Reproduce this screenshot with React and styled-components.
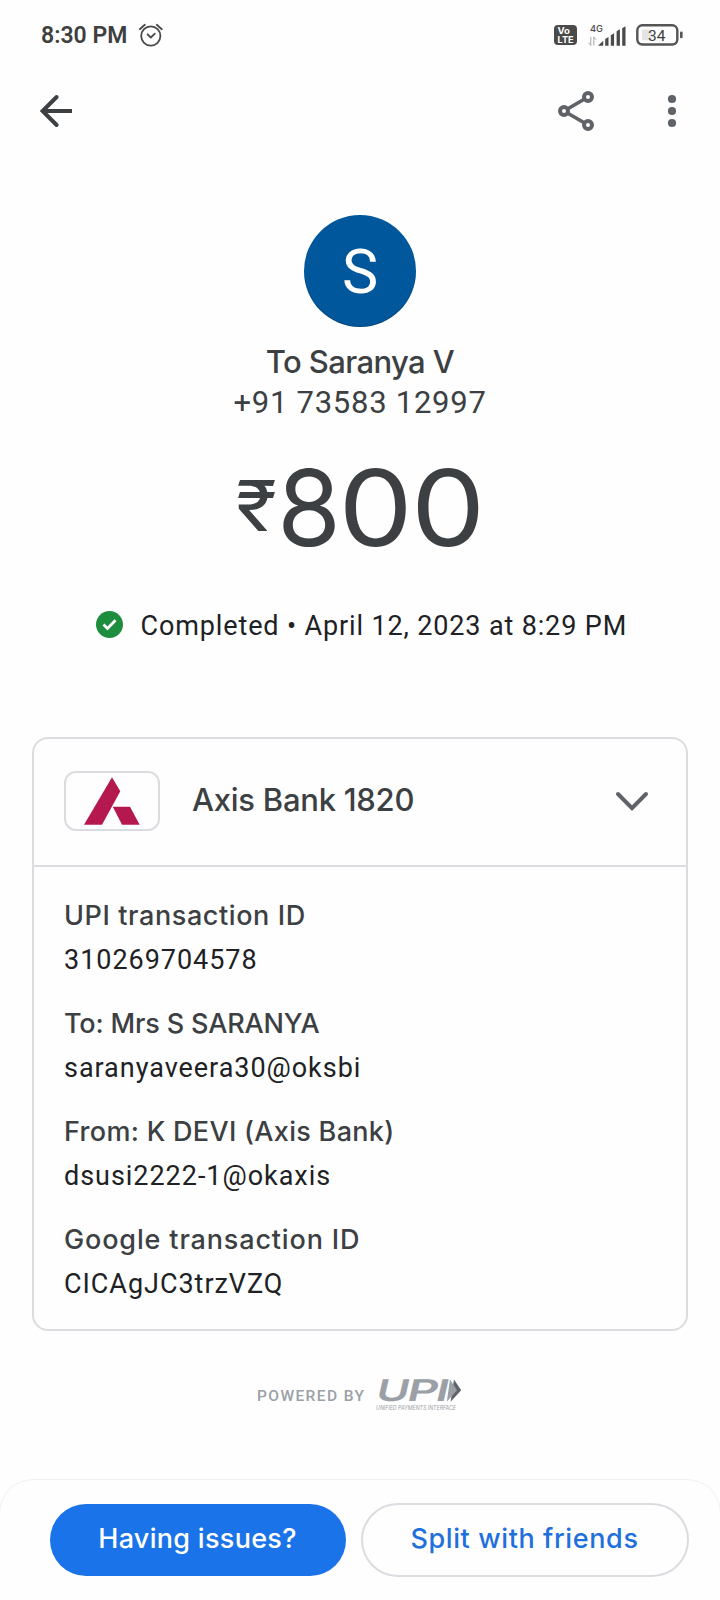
import React from "react";
import styled, { createGlobalStyle } from "styled-components";

const GlobalStyle = createGlobalStyle`
  * { box-sizing: border-box; }
  body { margin: 0; background: #fefefe; overflow: hidden; }
  svg { display: block; flex: none; overflow: visible; }
`;

const display = `"Inter", sans-serif`;
const body = `"Roboto", sans-serif`;

const Screen = styled.div`
  width: 720px;
  height: 1600px;
  display: flex;
  flex-direction: column;
  background: #fefefe;
  color: #3c4043;
  font-family: ${body};
  white-space: nowrap;
  overflow: hidden;
`;

const StatusBar = styled.div`
  height: 70px;
  display: flex;
  align-items: center;
  justify-content: space-between;
  padding: 0 37px 0 41px;
`;

const StatusGroup = styled.div`
  display: flex;
  align-items: center;
  gap: ${(p) => p.$gap}px;
`;

const Clock = styled.span`
  font-size: 23px;
  font-weight: 600;
  color: #3f3f3f;
`;

const AppBar = styled.header`
  height: 82px;
  display: flex;
  align-items: center;
  padding: 0 24px 0 32px;
`;

const IconButton = styled.button`
  width: 48px;
  height: 48px;
  padding: 0;
  border: 0;
  background: none;
  color: ${(p) => p.$color || "#5f6368"};
  margin-left: ${(p) => (p.$push ? "auto" : p.$gap ? `${p.$gap}px` : 0)};
`;

const Hero = styled.section`
  display: flex;
  flex-direction: column;
  align-items: center;
  padding-top: 63px;
`;

const Avatar = styled.div`
  width: 112px;
  height: 112px;
  border-radius: 50%;
  background: #01579b;
  box-shadow: inset 0 -1px 1px rgba(0, 0, 0, 0.2);
  color: #fff;
  font-size: 61px;
  line-height: 114px;
  text-align: center;
`;

const Payee = styled.h1`
  margin: 15px 0 0;
  font: 500 31px/40px ${display};
  letter-spacing: -0.6px;
`;

const Phone = styled.p`
  margin: 0;
  font-size: 31px;
  line-height: 41px;
  letter-spacing: 0.74px;
`;

const Amount = styled.div`
  display: flex;
  align-items: flex-start;
  align-self: flex-start;
  margin: 25px 0 0 237px;
  height: 120px;
  font-family: ${display};
`;

const Rupee = styled.span`
  width: 39px;
  font-size: 70px;
  line-height: 116px;
  display: flex;
  justify-content: center;
  transform: scaleX(1.08);
`;

const Digit = styled.span`
  width: ${(p) => p.$width}px;
  display: flex;
  justify-content: center;
  font-size: 106px;
  line-height: 120px;
  transform: scaleX(${(p) => p.$stretch});
`;

const Completed = styled.div`
  display: flex;
  align-items: center;
  align-self: flex-start;
  gap: 17.6px;
  margin: 42px 0 0 96px;
  height: 32px;
  font-size: 27px;
  letter-spacing: 0.86px;
  color: #202124;

  svg { margin-bottom: 3px; }
`;

const Card = styled.section`
  width: 656px;
  height: 594px;
  margin: 95px 0 0 32px;
  border: 2px solid #dadce0;
  border-radius: 16px;
  flex: none;
`;

const CardHeader = styled.div`
  height: 128px;
  display: flex;
  align-items: center;
  padding: 0 38px 2px 30px;
  border-bottom: 2px solid #dadce0;
`;

const BankLogo = styled.div`
  width: 96px;
  height: 60px;
  border: 2px solid #dadce0;
  border-radius: 12px;
  display: flex;
  justify-content: center;
`;

const BankName = styled.h2`
  flex: 1;
  margin: 0 0 3px 32px;
  font: 500 31px/40px ${display};
  letter-spacing: -0.25px;
`;

const Details = styled.dl`
  margin: 0;
  padding: 27px 30px 0;
  display: flex;
  flex-direction: column;
  gap: 19px;
`;

const Label = styled.dt`
  font: 500 27px/44px ${display};
  letter-spacing: ${(p) => p.$track}px;
`;

const Value = styled.dd`
  margin: 0;
  font-size: 27px;
  line-height: 45px;
  letter-spacing: 0.96px;
  color: #202124;
`;

const Powered = styled.div`
  display: flex;
  align-items: center;
  gap: 10px;
  height: 32px;
  margin: 48px 0 0 257px;
  font-size: 15.5px;
  font-weight: 500;
  line-height: 20px;
  letter-spacing: 1.41px;
  color: #9aa0a6;

  span { padding-top: 2px; }
`;

const ActionSheet = styled.footer`
  flex: none;
  height: 122px;
  margin: auto -1px -1px;
  display: flex;
  align-items: flex-start;
  gap: 15px;
  padding: 23px 0 0 50px;
  border: 1px solid #f1f1f1;
  border-bottom: 0;
  border-radius: 34px 34px 0 0;
`;

const PillButton = styled.button`
  width: ${(p) => p.$width}px;
  height: ${(p) => (p.$filled ? 72 : 74)}px;
  margin-top: ${(p) => (p.$filled ? 1 : 0)}px;
  padding: 0 1px 2px 0;
  border: ${(p) => (p.$filled ? "0" : "2px solid #dadce0")};
  border-radius: 37px;
  background: ${(p) => (p.$filled ? "#1a73e8" : "transparent")};
  color: ${(p) => (p.$filled ? "#fff" : "#1f70db")};
  font: 500 27px/32px ${display};
  letter-spacing: ${(p) => p.$track}px;
`;

const AlarmIcon = () => (
  <svg width="26" height="26" viewBox="0 0 26 26" fill="none" stroke="#4a4a4a" strokeWidth="1.8" strokeLinecap="round" strokeLinejoin="round">
    <circle cx="12.8" cy="14" r="9.6" />
    <path d="M9.6 12.3l3.2 3.2 4-3.8M1.8 7.2l5-4.4M23.8 7.2l-5-4.4" />
  </svg>
);

const VolteIcon = () => (
  <svg width="23" height="20" viewBox="0 0 23 20" fill="#fff" fontFamily="Inter, sans-serif" fontWeight="700">
    <rect width="23" height="20" rx="4" fill="#4a4a4a" />
    <text x="3.4" y="9" fontSize="8.5" textLength="12.5" lengthAdjust="spacingAndGlyphs">Vo</text>
    <text x="3.6" y="17.6" fontSize="9" textLength="16" lengthAdjust="spacingAndGlyphs">LTE</text>
  </svg>
);

const SignalIcon = () => (
  <svg width="38" height="24" viewBox="0 0 38 24" fill="#4a4a4a">
    <text x="2" y="8.6" fontSize="9.5" fontWeight="500" fontFamily="Inter, sans-serif" textLength="13" lengthAdjust="spacingAndGlyphs">4G</text>
    <path d="M2.8 14v8.5L.6 19.8M5.8 22.5V14l2.2 2.7" fill="none" stroke="#aaa" strokeWidth="1" />
    <path d="M10 22.8l5.2-5v5zM17.2 15.9l3.3-2v8.9h-3.3zM22.8 12.3l3.3-2v12.5h-3.3zM28.6 8.2l3.3-2v16.6h-3.3zM34.2 5.2l3.3-2v19.6h-3.3z" />
  </svg>
);

const BatteryIcon = () => (
  <svg width="47" height="22" viewBox="0 0 47 22">
    <rect x="1.3" y="1.3" width="40" height="19.2" rx="5" fill="none" stroke="#555" strokeWidth="2.4" />
    <rect x="5.8" y="5.5" width="10.5" height="10.8" rx="1.5" fill="#e4e4e4" />
    <rect x="44" y="7.6" width="2.6" height="6.6" rx="1" fill="#555" />
    <text x="20.8" y="16.6" textAnchor="middle" fontSize="15.5" fill="#3f3f3f" fontFamily="Roboto, sans-serif">34</text>
  </svg>
);

const BackIcon = () => (
  <svg width="48" height="48" viewBox="0 0 48 48" fill="none" stroke="currentColor" strokeWidth="4">
    <path d="M11.5 24H40" />
    <path d="M24.6 10L10.6 24l14 14" strokeLinecap="round" />
  </svg>
);

const ShareIcon = () => (
  <svg width="48" height="48" viewBox="0 0 48 48" fill="none" stroke="currentColor" strokeWidth="4">
    <path d="M12 24l24-14M12 24l24 14" strokeWidth="3.7" />
    <circle cx="12" cy="24" r="4" fill="#fefefe" />
    <circle cx="36" cy="10" r="4" fill="#fefefe" />
    <circle cx="36" cy="38" r="4" fill="#fefefe" />
  </svg>
);

const MoreIcon = () => (
  <svg width="48" height="48" viewBox="0 0 48 48" fill="currentColor">
    <circle cx="24" cy="12" r="4.1" />
    <circle cx="24" cy="24" r="4.1" />
    <circle cx="24" cy="36" r="4.1" />
  </svg>
);

const CheckIcon = () => (
  <svg width="27" height="27" viewBox="0 0 27 27">
    <circle cx="13.5" cy="13.5" r="13.5" fill="#1e8e3e" />
    <path d="M7.5 13.4l4 4 8-8.2" fill="none" stroke="#fff" strokeWidth="2.8" />
  </svg>
);

const AxisLogo = () => (
  <svg width="56" height="56" viewBox="0 0 56 56" fill="#b5184f">
    <path d="M28 4.3l8.3 14L18 51.7H0z" />
    <path d="M28.8 33.7H46l9.7 18H38z" />
  </svg>
);

const ChevronIcon = () => (
  <svg width="32" height="22" viewBox="0 0 32 22" fill="none" stroke="#5f6368" strokeWidth="4" strokeLinecap="round">
    <path d="M2 4l14 14.2L30 4" />
  </svg>
);

const UpiLogo = () => (
  <svg width="88" height="34" viewBox="0 0 88 34" fill="#9aa0a6" fontFamily="Inter, sans-serif">
    <g transform="translate(0 23.4) skewX(-13)" fontSize="30" fontWeight="600" letterSpacing="0">
      <text x="-0.6" y="0" textLength="33" lengthAdjust="spacingAndGlyphs">U</text>
      <text x="30.4" y="0" textLength="31" lengthAdjust="spacingAndGlyphs">P</text>
      <text x="59" y="0" textLength="13" lengthAdjust="spacingAndGlyphs">I</text>
    </g>
    <path d="M79 1.5l7.2 10.8-10.6 11.4z" fill="#5f6368" />
    <path d="M75 1.5l7 10.8-10.2 11.4z" />
    <text x="1" y="32" fontSize="6" fontStyle="italic" fontWeight="400" letterSpacing="0" textLength="80" lengthAdjust="spacingAndGlyphs">UNIFIED PAYMENTS INTERFACE</text>
  </svg>
);

const details = [
  { label: "UPI transaction ID", value: "310269704578", track: 0.6 },
  { label: "To: Mrs S SARANYA", value: "saranyaveera30@oksbi", track: -0.16 },
  { label: "From: K DEVI (Axis Bank)", value: "dsusi2222-1@okaxis", track: 0.31 },
  { label: "Google transaction ID", value: "CICAgJC3trzVZQ", track: 0.85 },
];

export default function App() {
  return (
    <Screen>
      <GlobalStyle />
      <StatusBar>
        <StatusGroup $gap={11}>
          <Clock>8:30 PM</Clock>
          <AlarmIcon />
        </StatusGroup>
        <StatusGroup $gap={10.5}>
          <VolteIcon />
          <SignalIcon />
          <BatteryIcon />
        </StatusGroup>
      </StatusBar>
      <AppBar>
        <IconButton $color="#3c4043" aria-label="Back"><BackIcon /></IconButton>
        <IconButton $push aria-label="Share"><ShareIcon /></IconButton>
        <IconButton $gap={48} aria-label="More"><MoreIcon /></IconButton>
      </AppBar>
      <Hero>
        <Avatar>S</Avatar>
        <Payee>To Saranya V</Payee>
        <Phone>+91 73583 12997</Phone>
        <Amount>
          <Rupee>₹</Rupee>
          <Digit $width={66} $stretch={0.97}>8</Digit>
          <Digit $width={67} $stretch={1.11}>0</Digit>
          <Digit $width={78} $stretch={1.11}>0</Digit>
        </Amount>
        <Completed>
          <CheckIcon />
          <span>Completed • April 12, 2023 at 8:29 PM</span>
        </Completed>
      </Hero>
      <Card>
        <CardHeader>
          <BankLogo><AxisLogo /></BankLogo>
          <BankName>Axis Bank 1820</BankName>
          <ChevronIcon />
        </CardHeader>
        <Details>
          {details.map((d) => (
            <div key={d.label}>
              <Label $track={d.track}>{d.label}</Label>
              <Value>{d.value}</Value>
            </div>
          ))}
        </Details>
      </Card>
      <Powered>
        <span>POWERED BY</span>
        <UpiLogo />
      </Powered>
      <ActionSheet>
        <PillButton $filled $width={296} $track={0.3}>Having issues?</PillButton>
        <PillButton $width={328} $track={0.61}>Split with friends</PillButton>
      </ActionSheet>
    </Screen>
  );
}
